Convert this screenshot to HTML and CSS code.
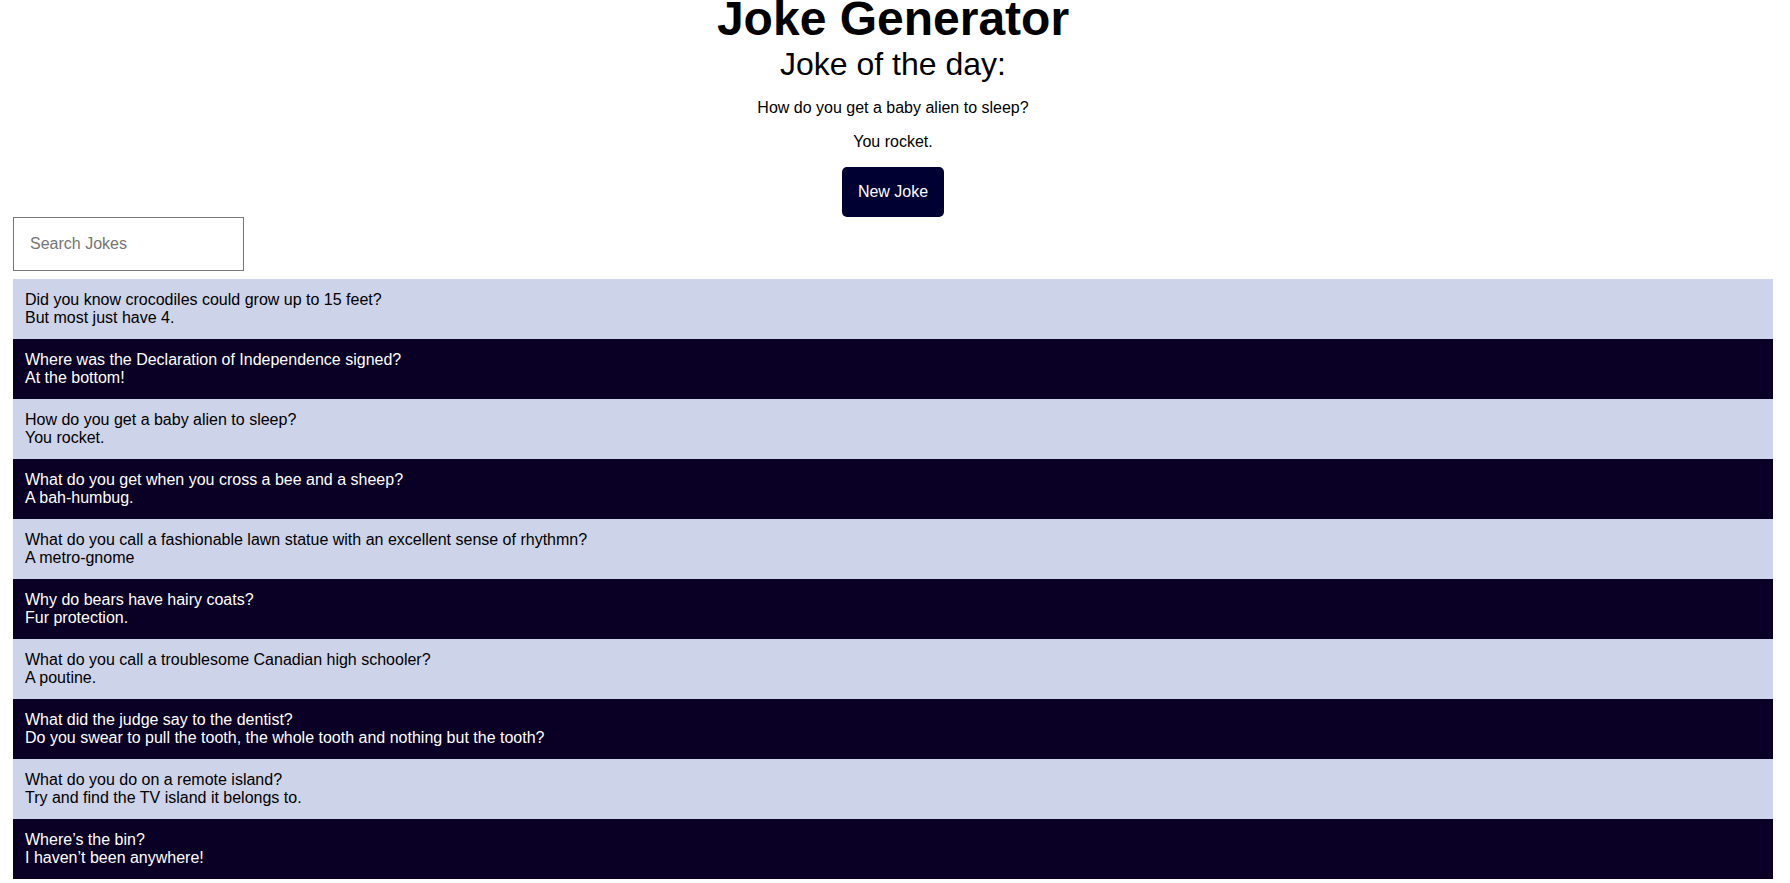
FILE: index.html
```html
<!DOCTYPE html>
<html lang="en">
<head>
<meta charset="utf-8">
<title>Joke Generator</title>
<link rel="stylesheet" href="styles.css">
</head>
<body>
<div class="page">
  <header class="hero">
    <h1 class="title">Joke Generator</h1>
    <h2 class="subtitle">Joke of the day:</h2>
    <p class="daily">How do you get a baby alien to sleep?</p>
    <p class="daily">You rocket.</p>
    <div class="actions">
      <button class="new-joke" type="button">New Joke</button>
    </div>
  </header>
  <input class="search" type="text" placeholder="Search Jokes">
  <ul class="jokes">
    <li class="joke light"><div>Did you know crocodiles could grow up to 15 feet?</div><div>But most just have 4.</div></li>
    <li class="joke dark"><div>Where was the Declaration of Independence signed?</div><div>At the bottom!</div></li>
    <li class="joke light"><div>How do you get a baby alien to sleep?</div><div>You rocket.</div></li>
    <li class="joke dark"><div>What do you get when you cross a bee and a sheep?</div><div>A bah-humbug.</div></li>
    <li class="joke light"><div>What do you call a fashionable lawn statue with an excellent sense of rhythmn?</div><div>A metro-gnome</div></li>
    <li class="joke dark"><div>Why do bears have hairy coats?</div><div>Fur protection.</div></li>
    <li class="joke light"><div>What do you call a troublesome Canadian high schooler?</div><div>A poutine.</div></li>
    <li class="joke dark"><div>What did the judge say to the dentist?</div><div>Do you swear to pull the tooth, the whole tooth and nothing but the tooth?</div></li>
    <li class="joke light"><div>What do you do on a remote island?</div><div>Try and find the TV island it belongs to.</div></li>
    <li class="joke dark"><div>Where’s the bin?</div><div>I haven’t been anywhere!</div></li>
  </ul>
</div>
</body>
</html>
```
FILE: styles.css
```css
html, body {
  margin: 0;
  padding: 0;
  background: #ffffff;
}

body {
  font-family: "Liberation Sans", Arial, sans-serif;
  font-size: 16px;
  color: #000000;
}

.page {
  padding: 0 17px 0 13px;
}

.hero {
  text-align: center;
}

.title {
  margin: -9px 0 0;
  font-size: 48px;
  font-weight: bold;
  line-height: normal;
}

.subtitle {
  margin: 0;
  font-size: 32px;
  font-weight: normal;
  line-height: normal;
}

.daily {
  margin: 16px 0;
  font-size: 16px;
  line-height: normal;
}

.actions {
  display: flex;
  justify-content: center;
  margin-top: 16px;
}

.new-joke {
  background: #000033;
  color: #ffffff;
  border: none;
  border-radius: 5px;
  padding: 16px;
  font-family: "Liberation Sans", Arial, sans-serif;
  font-size: 16px;
  line-height: normal;
}

.search {
  display: block;
  box-sizing: border-box;
  width: 231px;
  height: 54px;
  margin: 0 0 8px;
  padding: 0 16px;
  border: 1px solid #767676;
  border-radius: 0;
  font-family: "Liberation Sans", Arial, sans-serif;
  font-size: 16px;
  color: #000;
}

.search::placeholder {
  color: #757575;
}

.jokes {
  list-style: none;
  margin: 0;
  padding: 0;
}

.joke {
  padding: 12px;
  line-height: 18px;
}

.joke.light {
  background: #cdd3e8;
  color: #000000;
}

.joke.dark {
  background: #0a0025;
  color: #ffffff;
}
```
